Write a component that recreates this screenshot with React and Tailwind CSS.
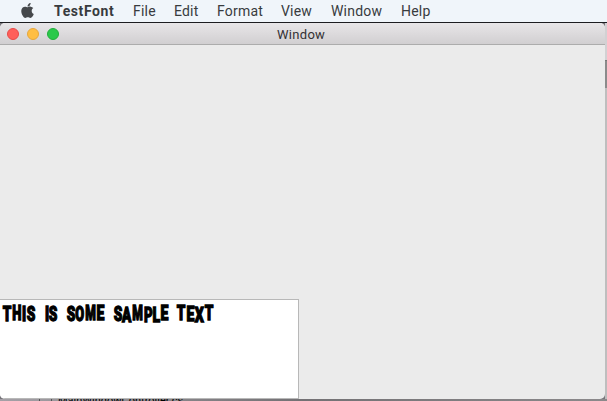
import React from "react";
import { FaApple } from "react-icons/fa";

const menus = [
  { label: "File", space: "w-[41px]" },
  { label: "Edit", space: "w-[43px]" },
  { label: "Format", space: "w-[64px]" },
  { label: "View", space: "w-[50px]" },
  { label: "Window", space: "w-[70px]" },
  { label: "Help", space: "w-[40px]" },
];

// Each glyph carries its advance in pixels, its drop and its horizontal squeeze.
const words = [
  { gap: 9, letters: [["T", 9.3, 0.3, 0.7], ["H", 10, -1, 0.67], ["I", 5, 0.3, 0.7], ["S", 8.3, 0.3, 0.7]] },
  { gap: 8.5, letters: [["I", 5, 0, 0.7], ["S", 8.5, 0.3, 0.7]] },
  { gap: 8.7, letters: [["S", 9.3, 0, 0.7], ["O", 9.5, 0, 0.66], ["M", 12, -1, 0.62], ["E", 7.7, -1, 0.72]] },
  { gap: 8, letters: [["S", 9.1, 0.3, 0.7], ["A", 9.3, 1, 0.7], ["M", 12, -1, 0.62], ["P", 9, 1, 0.68], ["L", 8, 1, 0.72], ["E", 7.8, -1, 0.72]] },
  { gap: 0, letters: [["T", 9.6, -1, 0.7], ["E", 8, 0, 0.72], ["X", 10, 1, 0.73], ["T", 9.3, -1, 0.7]] },
];

function SampleText() {
  return (
    <div className="flex h-[20px] font-['Roboto'] text-[19.5px] leading-[20px] font-black text-black [-webkit-text-stroke:1.3px_#000]">
      {words.map((word, i) => (
        <span key={i} className="flex shrink-0" style={{ marginRight: word.gap }}>
          {word.letters.map(([ch, width, drop, scale], j) => (
            <span key={j} className="flex shrink-0 justify-center" style={{ width }}>
              <span style={{ transform: `translateY(${drop}px) scaleX(${scale})` }}>{ch}</span>
            </span>
          ))}
        </span>
      ))}
    </div>
  );
}

export default function App() {
  return (
    <div className="flex h-[401px] w-[607px] flex-col overflow-hidden bg-[#77757a] font-['Roboto',sans-serif]">
      <header className="flex h-[22px] shrink-0 items-center bg-[#f0f5fa] pl-[19px] text-[14px] text-[#383b3e]">
        <FaApple className="mb-[1px] size-[17px] shrink-0 text-[#45484b]" />
        <span className="ml-[18px] w-[79px] shrink-0 font-bold tracking-[0.6px]">TestFont</span>
        {menus.map((m) => (
          <span key={m.label} className={`shrink-0 whitespace-nowrap tracking-[0.2px] ${m.space}`}>{m.label}</span>
        ))}
      </header>
      <div className="h-px shrink-0 bg-[#1c1d20]" />
      <div className="flex h-[376px] shrink-0">
        <main className="flex w-[605px] shrink-0 flex-col overflow-hidden rounded-[5px] bg-[#ebebeb]">
          <div className="flex h-[22px] shrink-0 items-center border-b border-[#acacac] bg-gradient-to-b from-[#e8e6e8] to-[#d1cfd1] pl-[7px]">
            <div className="flex gap-[8px]">
              <span className="size-[12px] rounded-full border border-[#e64b48] bg-[#ff5f5a]" />
              <span className="size-[12px] rounded-full border border-[#e6a63d] bg-[#ffbe42]" />
              <span className="size-[12px] rounded-full border border-[#23ad3c] bg-[#2bc94b]" />
            </div>
            <span className="mt-[2px] ml-[218px] text-[13px] tracking-[0.3px] text-[#333134]">Window</span>
          </div>
          <div className="flex flex-1 items-end">
            <div className="h-[100px] w-[299px] rounded-bl-[3px] border-t border-r border-b border-[#b8b8b8] bg-white pt-[5px] pl-[2.5px]">
              <SampleText />
            </div>
          </div>
        </main>
        <aside className="flex w-[2px] flex-col">
          <div className="h-[37px] bg-[#d2d1d3]" />
          <div className="h-px bg-[#777777]" />
          <div className="h-[27px] bg-[#8b8b8b]" />
          <div className="flex-1 bg-[#bebebe]" />
        </aside>
      </div>
      <footer className="flex h-[2px] shrink-0 overflow-hidden bg-gradient-to-r from-[#a4a0a6] via-[#737174] to-[#8b898b] pl-[39px] text-black">
        <span className="mr-[6px] h-[2px] w-[13px] border-x border-[#555555]" />
        <span className="-mt-[4px] h-[12px] text-[11px] leading-[11px]">MainWindowController.cs</span>
      </footer>
    </div>
  );
}
